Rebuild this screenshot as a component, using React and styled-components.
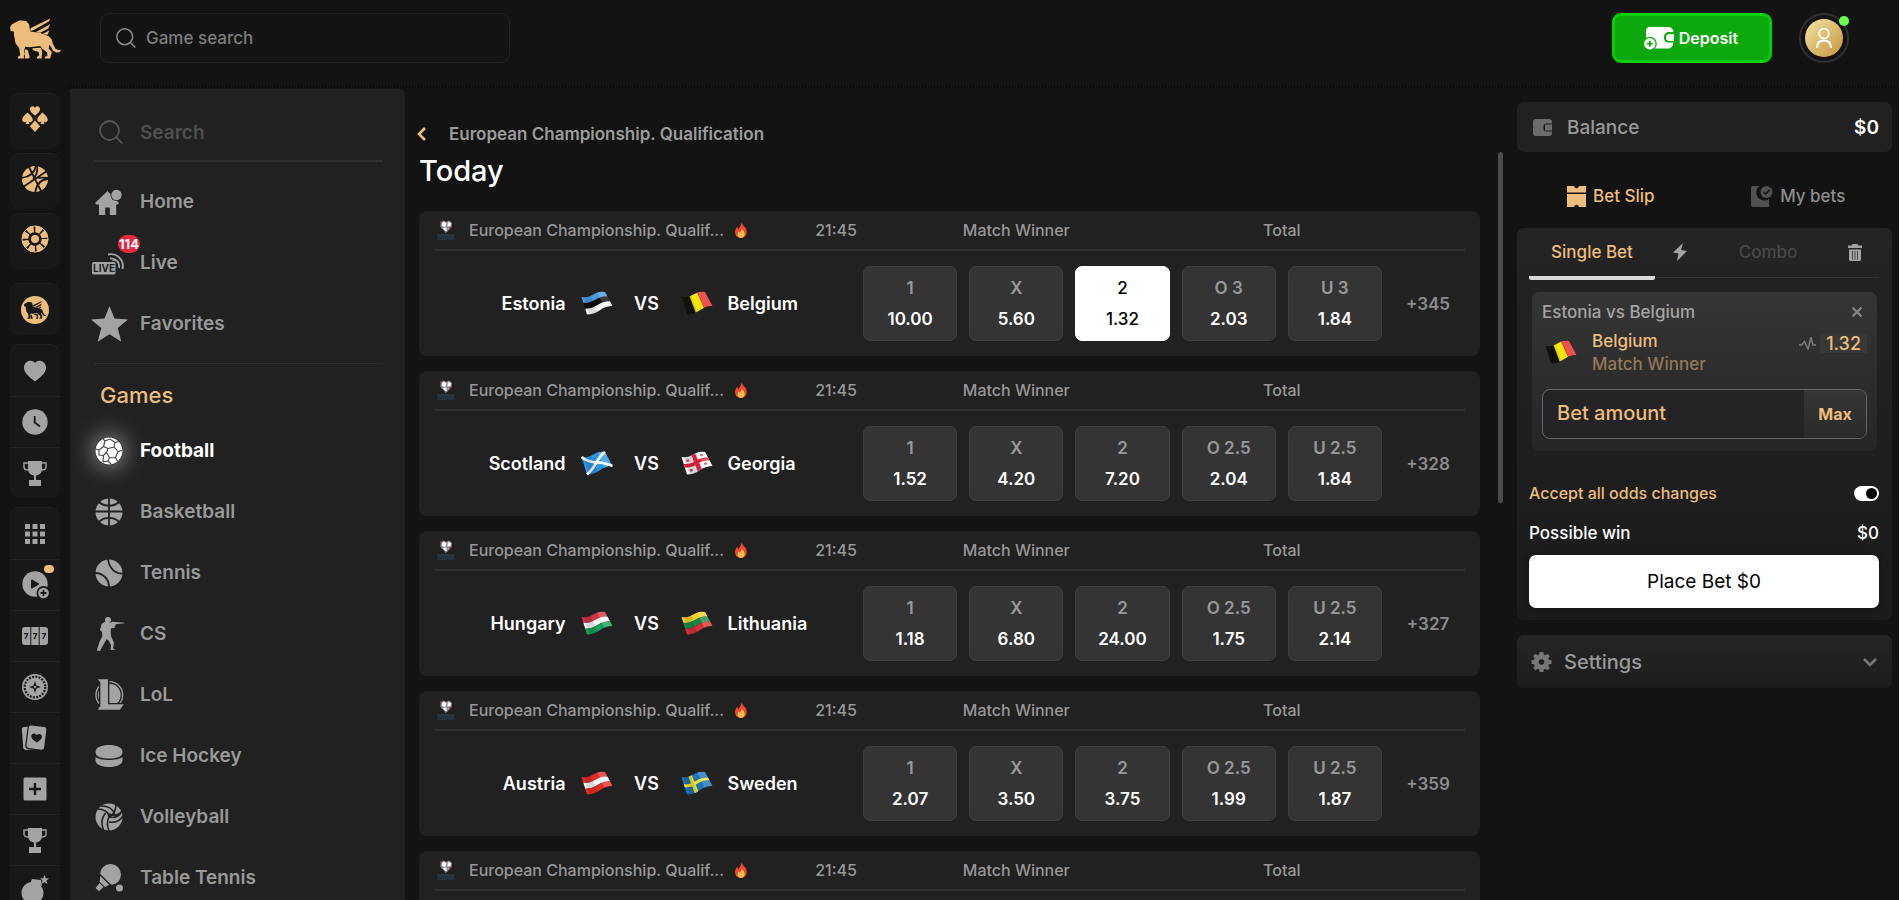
import { useState } from 'react'
import styled, { createGlobalStyle } from 'styled-components'


const gold = '#ecbd7c'
const grey = '#a3a3a3'
const panel = '#212121'

const GlobalStyle = createGlobalStyle`
  * {
    box-sizing: border-box;
  }
  body {
    margin: 0;
    background: #131313;
    color: white;
    font-family: Inter, "Liberation Sans", sans-serif;
    font-size: 16px;
    font-weight: 500;
  }
  button, input {
    font: inherit;
    color: inherit;
    padding: 0;
    border: none;
    background: none;
  }
  button {
    cursor: pointer;
  }
  a {
    color: inherit;
    text-decoration: none;
  }
  h1, h2, h3, ul, p {
    margin: 0;
    padding: 0;
    list-style: none;
    font-weight: 500;
  }
  svg {
    display: block;
    flex-shrink: 0;
  }
`


/* ---------- drawings ---------- */

const lionPaths = <>
    <path d="M0 26L6 18 18 12 30 6 50 9 58 18 61 40 90 44 118 54 127 64 130 76 138 92 148 97 156 95 150 103 140 104 130 97 122 82 119 80 118 92 127 102 122 122 106 122 106 117 114 113 112 103 98 92 92 84 60 88 46 86 43 98 42 122 24 122 24 117 31 112 28 90 17 76 12 50 12 40 2 38z"/>
    <path d="M46 94l8 2 6 22-4 4H44l2-6-3-8zM68 91l26-2 4 12-2 21H82v-5l7-5-2-10-17-5z"/>
    <path d="M62 30L122 0l-3 9-44 25-13 5zM78 42l44-24-6 13-24 13zM98 48l22-12-6 14z"/>
</>

const Lion = ({size = 52}) =>
    <svg width={size} height={size * 0.8} viewBox="0 0 158 124" fill={gold}>{lionPaths}</svg>

const Svg = ({w = 28, h = 28, box, children}) =>
    <svg width={w} height={h} viewBox={box || `0 0 ${w} ${h}`} fill="currentColor">{children}</svg>

const SearchIcon = ({size = 20}) =>
    <svg width={size} height={size} viewBox="0 0 24 24" fill="none" stroke="currentColor" strokeWidth="1.8">
        <circle cx="10.5" cy="10.5" r="9.5"/>
        <path d="M17.3 17.3l6 6"/>
    </svg>

const SuitsIcon = () =>
    <Svg w={26} h={26}>
        <path d="M13 9.5C9 6.5 8 5 8 3c0-3 4-4 5-1 1-3 5-2 5 1 0 2-1 3.5-5 6.5z"/>
        <path d="M5.5 6.5C9 10 10.8 11.5 10.8 13.8c0 2.4-3 3-4.3 1.7L7.5 18h-4l1-2.5C3.2 16.8.2 16.2.2 13.8.2 11.5 2 10 5.5 6.5zM20.5 6.5c3.5 3.5 5.3 5 5.3 7.3 0 2.4-3 3-4.3 1.7l1 2.5h-4l1-2.5c-1.3 1.3-4.3.7-4.3-1.7 0-2.3 1.8-3.8 5.3-7.3z"/>
        <path d="M13 14.5l5.2 5.8L13 26l-5.2-5.7z"/>
    </Svg>

const SportIcon = () =>
    <Svg w={26} h={26}>
        <circle cx="13" cy="13" r="13"/>
        <g fill="none" stroke="#181818" strokeWidth="1.8">
            <path d="M1 21L25 5M7 1l12 24M14-1c-1 8-6 12-15 13M27 13c-9 0-13 6-14 15M15-1c1 6-1 11-4 14M26 12c-7-1-12 0-15 1"/>
        </g>
    </Svg>

const RouletteIcon = () =>
    <Svg w={28} h={28}>
        <circle cx="14" cy="14" r="10" fill="none" stroke="currentColor" strokeWidth="6.5" strokeDasharray="6.2 1.654"/>
        <circle cx="14" cy="14" r="13" fill="none" stroke="currentColor" strokeWidth="1"/>
        <circle cx="14" cy="14" r="4"/>
    </Svg>

const LionCoinIcon = () =>
    <svg width="28" height="28" viewBox="0 0 28 28">
        <circle cx="14" cy="14" r="14" fill={gold}/>
        <svg x="3" y="5" width="23" height="18" viewBox="0 0 158 124" fill="#181818">{lionPaths}</svg>
    </svg>

const HeartIcon = () =>
    <Svg w={24} h={22}>
        <path d="M12 21.5C4 15.5 1 12 1 7.5 1 1 9-1.5 12 3c3-4.5 11-2 11 4.5 0 4.5-3 8-11 14z"/>
    </Svg>

const ClockIcon = () =>
    <Svg w={26} h={26}>
        <circle cx="13" cy="13" r="12.7"/>
        <path d="M12.7 7v6.5l5.3 4" fill="none" stroke="#181818" strokeWidth="1.8"/>
    </Svg>

const TrophyIcon = () =>
    <Svg w={24} h={25}>
        <path d="M5 0h14v8c0 3.5-2.5 6-6 6.5V19h5v6H6v-6h5v-4.5C7.5 14 5 11.5 5 8z"/>
        <path d="M5.5 2H1v4c0 2 1.5 3 4.5 3M18.5 2H23v4c0 2-1.5 3-4.5 3" fill="none" stroke="currentColor" strokeWidth="1.4"/>
    </Svg>

const GridIcon = () =>
    <Svg w={20} h={20}>
        <path d="M0 0h5v5H0zM7.5 0h5v5h-5zM15 0h5v5h-5zM0 7.5h5v5H0zM7.5 7.5h5v5h-5zM15 7.5h5v5h-5zM0 15h5v5H0zM7.5 15h5v5h-5zM15 15h5v5h-5z"/>
    </Svg>

const PlayPlusIcon = () =>
    <Svg w={28} h={28}>
        <circle cx="14" cy="13" r="12.7"/>
        <path d="M11 9.5l6 3.5-6 3.5z" fill="#181818" stroke="#181818" strokeLinejoin="round" strokeWidth="2"/>
        <circle cx="22.5" cy="22" r="7" fill="#181818"/>
        <circle cx="22.5" cy="22" r="5.3"/>
        <path d="M22.5 19v6M19.5 22h6" stroke="#181818" strokeWidth="1.8"/>
    </Svg>

const SlotsIcon = () =>
    <Svg w={26} h={18}>
        <rect width="26" height="18" rx="3"/>
        <path d="M8.8 0v18M17.2 0v18" stroke="#181818"/>
        <g fill="#181818" fontSize="8" fontWeight="800" textAnchor="middle">
            <text x="4.2" y="12">7</text>
            <text x="13" y="12">7</text>
            <text x="21.8" y="12">7</text>
        </g>
    </Svg>

const ChipIcon = () =>
    <Svg w={26} h={26}>
        <circle cx="13" cy="13" r="13"/>
        <circle cx="13" cy="13" r="10.3" fill="none" stroke="#181818" strokeWidth="2.2" strokeDasharray="2 1.236"/>
        <path d="M13 7l1.5 4.5L19 13l-4.5 1.5L13 19l-1.5-4.5L7 13l4.5-1.5z" fill="#181818"/>
        <circle cx="13" cy="13" r="1.2"/>
    </Svg>

const CardsIcon = () =>
    <Svg w={28} h={28}>
        <rect x="1.5" y="2.5" width="18" height="23" rx="2.5" transform="rotate(-4 10 14)"/>
        <rect x="6" y="1.5" width="19" height="24" rx="3" transform="rotate(7 15 13)" stroke="#181818" strokeWidth="1.2"/>
        <path d="M16 18.5c-5-3-6-5-5.6-7 .6-2.5 4-2.8 5.3-.4 1.8-2.1 5.2-1.3 5.3 1.2 0 2.2-1.5 4-5 6.2z" fill="#181818"/>
    </Svg>

const PlusBoxIcon = () =>
    <Svg w={24} h={24}>
        <rect x=".5" y=".5" width="23" height="23" rx="1.5"/>
        <path d="M12 6v12M6 12h12" stroke="#181818" strokeWidth="2.4"/>
    </Svg>

const BombIcon = () =>
    <Svg w={28} h={32}>
        <circle cx="11.5" cy="18" r="11"/>
        <path d="M9 9l2-5 9 1 1 6z"/>
        <path d="M23.5 0l1.3 3.2 3.2.2-2.5 2.2.9 3.4-2.9-1.8L20.6 9l.9-3.4L19 3.4l3.2-.2z"/>
    </Svg>

const HomeIcon = () =>
    <Svg w={28} h={26}>
        <path d="M0 14L12.5 2l11.5 12-1.5 1.5h-1.3V26h-6.4v-7.5h-4.6V26H4V15.5H1.5z"/>
        <circle cx="21.5" cy="6" r="6" fill={panel}/>
        <circle cx="21.5" cy="6" r="5.2"/>
    </Svg>

const LiveIcon = () =>
    <Svg w={34} h={24}>
        <path d="M16 3.5A12 12 0 0 1 30.5 18M18 7.5A8 8 0 0 1 27 17" fill="none" stroke="currentColor" strokeWidth="1.9"/>
        <circle cx="21.5" cy="11.5" r="2.6"/>
        <rect y="10" width="24.5" height="14" rx="2" fill={panel}/>
        <rect y="11" width="23.5" height="12.5" rx="1.5"/>
        <text x="12" y="21" fontSize="10" fontWeight="700" textAnchor="middle" fill={panel}>LIVE</text>
    </Svg>

const StarIcon = () =>
    <Svg w={37} h={36}>
        <path d="M18.5 0l5 12.5L37 13.5 26.7 22l3.6 13.7-11.8-7.5-11.8 7.5L10.3 22 0 13.5l13.5-1z"/>
    </Svg>

const FootballIcon = () =>
    <Svg w={28} h={28}>
        <circle cx="14" cy="14" r="13.5" fill="white"/>
        <g fill="none" stroke="#444" strokeWidth="1.1">
            <path d="M13 11.5l6-1.5 4 4.5-2.5 6-6 .2-3-5.2zM13 11.5L8.5 9.5 4 13v5l4.5.5 3-3M19 10l1-4.5-5-3.5-5 2-1.5 5.5M20 5.5l3.5-1M23 14.5l4-1M20.5 20.5l2 3.5M14.5 20.7L13 24l-5 1M8.5 18.5L8 25M4 13l-3-1M10 4L8 2M13 24l3 3"/>
        </g>
    </Svg>

const BasketballIcon = () =>
    <Svg w={28} h={28}>
        <circle cx="14" cy="14" r="13.5"/>
        <g fill="none" stroke={panel} strokeWidth="1.8">
            <path d="M14 0v28M0 13.5h28M4 4c5 5 15 5 20 0M4 24c5-5.5 15-5.5 20 0"/>
        </g>
    </Svg>

const TennisIcon = () =>
    <Svg w={28} h={28}>
        <circle cx="14" cy="14" r="13.5"/>
        <path d="M0 14c8 0 14 6 14 14M13 0c1 9 7 15 15 14.5" fill="none" stroke={panel} strokeWidth="1.8"/>
    </Svg>

const ShooterIcon = () =>
    <Svg w={29} h={34} box="0 0 87 102">
        <circle cx="39" cy="9" r="9"/>
        <path d="M30 14l-10 6-5 18 6 7 1 13-9 18-7 22 1 3 8 1 3-6 17-30 6 5 7 13-1 15 14-1-7-4 3-16-9-21-1-15 1-8 10-1 4-11 27-3v-2l-27-2-9-1-8 3z"/>
    </Svg>

const LolIcon = () =>
    <Svg w={29} h={31} box="0 0 87 93">
        <circle cx="43" cy="48" r="40" fill="none" stroke="currentColor" strokeWidth="4"/>
        <circle cx="43" cy="48" r="34"/>
        <path d="M8 1h31v75h47l-11 16H8l8-11V10z" stroke={panel} strokeWidth="8"/>
        <path d="M8 1h31v75h47l-11 16H8l8-11V10z"/>
    </Svg>

const PuckIcon = () =>
    <Svg w={28} h={24}>
        <path d="M.5 8C.5 3 7 1 14 1s13.5 2 13.5 7S21 14.500 14 14.500.5 13 .5 8z"/>
        <path d="M.5 13c4 4 23 4 27 0v3.500C27 21 21 23 14 23S1 21 .5 16.500z"/>
    </Svg>

const VolleyballIcon = () =>
    <Svg w={28} h={28}>
        <circle cx="14" cy="14" r="13.5"/>
        <g fill="none" stroke={panel} strokeWidth="1.6">
            <path d="M14 14c0-5-5-8-12-8M19.5 11C18 6 13 3 6 3M27 8c-3 4-8 5-13 3M14 14c5-2 7-6 7-13M10.500 10c-4 5-5 10-2 17M14 14c-2 4-2 9 0 14M14 19c6 1 11-1 14-6M14 14c4 1 9 0 12-4"/>
        </g>
    </Svg>

const TableTennisIcon = () =>
    <Svg w={28} h={28}>
        <circle cx="15.5" cy="10.5" r="10.5"/>
        <path d="M5.5 12.5L14 21l-4 2-5.5-5.5z"/>
        <path d="M5 10.5L16 21.5" stroke={panel} strokeWidth="1.5"/>
        <path d="M4.5 19l4 4L4 27.3.5 24z"/>
        <circle cx="24.5" cy="24" r="4.7" fill={panel}/>
        <circle cx="24.5" cy="24" r="3.5"/>
    </Svg>

const WalletPlusIcon = () =>
    <Svg w={30} h={23}>
        <path d="M6 0h18c3 0 5 1.5 5.5 5H25c-3.5 0-5 2.5-5 5.5s1.5 5 5 5h4.5c-.5 4-2.5 6-5.5 6H7c-3 0-5-2-5-5V5c0-3 1-5 4-5z"/>
        <path d="M25.5 7H30v7h-4.5c-2.5 0-3.5-1.5-3.5-3.5S23 7 25.5 7z"/>
        <circle cx="5.8" cy="16.7" r="7" fill="#0ca80c"/>
        <circle cx="5.8" cy="16.7" r="5.7"/>
        <path d="M5.8 13.7v6M2.8 16.7h6" stroke="#0ca80c" strokeWidth="1.8"/>
    </Svg>

const UserIcon = () =>
    <svg width="16" height="20" viewBox="0 0 16 20" fill="none" stroke="white" strokeWidth="1.8">
        <circle cx="8" cy="5.5" r="4.8"/>
        <path d="M1 20c0-5.5 3-7.5 7-7.5s7 2 7 7.5"/>
    </svg>

const WalletIcon = () =>
    <Svg w={19} h={17}>
        <path d="M3 0h13a3 3 0 0 1 3 3v1.5h-6A2.5 2.5 0 0 0 10.5 7v3a2.5 2.5 0 0 0 2.5 2.5h6V14a3 3 0 0 1-3 3H3a3 3 0 0 1-3-3V3a3 3 0 0 1 3-3z" fill="#6c6c6c"/>
        <rect x="12" y="5.5" width="7" height="6" fill="#6c6c6c"/>
    </Svg>

const TicketIcon = () =>
    <Svg w={19} h={21}>
        <path d="M0 0h7c.5 3 4.5 3 5 0h7v6.5H0zM0 8h19v13h-7c-.5-3-4.5-3-5 0H0z"/>
    </Svg>

const MyBetsIcon = () =>
    <Svg w={22} h={21}>
        <path d="M2 0h6.500a8 8 0 0 0 9.500 13v8H2a2 2 0 0 1-2-2V2a2 2 0 0 1 2-2z" fill="#515151"/>
        <circle cx="15.5" cy="6" r="6" fill="#515151"/>
        <path d="M12.5 6l2.200 2 4-4.200" fill="none" stroke="#131313" strokeWidth="1.6"/>
    </Svg>

const BoltIcon = () =>
    <Svg w={14} h={18}>
        <path d="M10 0L0 9.5l5.5 1L4 18l10-10-6-1z"/>
    </Svg>

const TrashIcon = () =>
    <Svg w={14} h={17}>
        <path d="M4.5 0h5l.7 1.5H14V4H0V1.5h3.8zM1 5.5h12V16l-1 1H2l-1-1z"/>
        <path d="M4.5 7v8.5M7 7v8.5M9.5 7v8.5" stroke="#4b4b4b" strokeWidth="1"/>
    </Svg>

const CloseIcon = () =>
    <svg width="10" height="10" viewBox="0 0 10 10" stroke="#8a8a8a" strokeWidth="2">
        <path d="M.5.5l9 9M9.5.5l-9 9"/>
    </svg>

const PulseIcon = () =>
    <svg width="17" height="13" viewBox="0 0 17 13" fill="none" stroke="#7d7d7d" strokeWidth="1.5">
        <path d="M0 8h2.5L5.5 4.5 9 12l3-11.5L14 8h3"/>
    </svg>

const Chevron = ({dir}) =>
    <svg width="14" height="14" viewBox="0 0 14 14" fill="none" stroke="currentColor" strokeWidth="2.6">
        <path d={dir === 'left' ? 'M10 1L4 7l6 6' : 'M1 4l6 6 6-6'}/>
    </svg>

const GearIcon = () =>
    <Svg w={21} h={20} box="0 0 20 20">
        <path fillRule="evenodd" d="M8.2 0h3.6l.5 2.5 1.5.7L16 1.8 18.3 4l-1.5 2.2.7 1.6 2.5.5v3.5l-2.5.4-.7 1.6 1.5 2.2-2.3 2.3-2.2-1.5-1.5.7-.5 2.5H8.2l-.5-2.5-1.5-.7L4 18.3 1.7 16l1.5-2.2-.7-1.6L0 11.8V8.3l2.5-.5.7-1.6L1.7 4 4 1.8l2.2 1.4 1.5-.7zM10 7.2a2.8 2.8 0 1 0 0 5.6 2.8 2.8 0 0 0 0-5.6z"/>
    </Svg>

const FireIcon = () =>
    <svg width="12" height="16" viewBox="0 0 12 16">
        <path d="M6.5 0C7 3 10 4 11.3 7.5 12.8 12 10 16 6 16S-.7 12.5.3 8.5C.7 7 1.5 6 1.8 5c.7.5 1.2 1.2 1.4 2C5 5.5 6.5 3 6.5 0z" fill="#f2452f"/>
        <path d="M6.8 6c.2 2 3 3.5 2.8 6-.1 2.5-1.8 3.7-3.6 3.7S2.3 14.3 2.5 12c.1-1 .6-1.8 1.2-2.3.3.5.6.8 1 1C5.8 9.5 6.7 8 6.8 6z" fill="#fbc150"/>
    </svg>

const EmblemIcon = () =>
    <svg width="20" height="21" viewBox="0 0 20 21">
        <path d="M4.5 2L8 .5l2 1.500L13 .5 16 3l-.5 4L11 12l-2 1v-1.500L4.500 7z" fill="#8d9297"/>
        <path d="M6 2.500L9 2l1.500 2-1.500 3-3-1zM12 2l3 1-.5 3-3 .5zM7 8l3-.5L11 11H9z" fill="white"/>
        <path d="M4.500 1.500L6.500.5 5 5zM14 7l2-1-3 4z" fill="#9c3f46"/>
        <g fill="#31485a" fontSize="3" fontWeight="700" textAnchor="middle">
            <text x="10" y="17">EUROPEAN</text>
            <text x="10" y="20">QUALIFIERS</text>
        </g>
    </svg>


/* Flags wave: s runs along the cloth, t runs down it, both from 0 to 1 */

const point = (s, t) => {
    const x = .5 + 23.5 * s + 5.5 * t + 2 * s * t
    const y = 6 + 17.5 * t - 5 * s - 3.5 * s * t + 1.2 * Math.sin(2 * Math.PI * s)
    return `${x.toFixed(2)},${y.toFixed(2)}`
}

const steps = [0, 1, 2, 3, 4, 5, 6, 7, 8]

const Patch = ({s0 = 0, s1 = 1, t0 = 0, t1 = 1, fill, opacity}) => {
    const top = steps.map(i => point(s0 + (s1 - s0) * i / 8, t0))
    const bottom = steps.map(i => point(s1 - (s1 - s0) * i / 8, t1))
    return <polygon points={[...top, ...bottom].join(' ')} fill={fill} opacity={opacity}/>
}

const stripes = (...colors) => colors.map((fill, i) => ({t0: i / 3, t1: (i + 1) / 3, fill}))

const flags = {
    Estonia: stripes('#4a9be0', '#08090b', '#f7f7f7'),
    Belgium: [{s1: .34, fill: '#15130f'}, {s0: .34, s1: .67, fill: '#f6e40c'}, {s0: .67, fill: '#ec2626'}],
    Scotland: [{fill: '#2b95e6'}],
    Georgia: [
        {fill: '#f7f7f7'}, {s0: .42, s1: .58, fill: '#e01e3c'}, {t0: .4, t1: .6, fill: '#e01e3c'},
        {s0: .16, s1: .27, t0: .14, t1: .28, fill: '#e8405a'}, {s0: .73, s1: .84, t0: .14, t1: .28, fill: '#e8405a'},
        {s0: .16, s1: .27, t0: .72, t1: .86, fill: '#e8405a'}, {s0: .73, s1: .84, t0: .72, t1: .86, fill: '#e8405a'},
    ],
    Hungary: stripes('#d23344', '#f7f7f7', '#16a05a'),
    Lithuania: stripes('#f0d02c', '#178a48', '#d63038'),
    Austria: stripes('#e42b28', '#f7f7f7', '#e42b28'),
    Sweden: [{fill: '#1c74b8'}, {s0: .3, s1: .44, fill: '#f2e32a'}, {t0: .41, t1: .59, fill: '#f2e32a'}],
}

const Flag = ({country}) =>
    <svg width="32" height="26" viewBox="0 0 32 26">
        {flags[country].map((patch, i) => <Patch key={i} {...patch}/>)}
        {country === 'Scotland' &&
            <g fill="none" stroke="white" strokeWidth="2.6">
                <polyline points={steps.map(i => point(i / 8, i / 8)).join(' ')}/>
                <polyline points={steps.map(i => point(i / 8, 1 - i / 8)).join(' ')}/>
            </g>}
        <Patch s0={.1} s1={.4} fill="black" opacity=".12"/>
        <Patch s0={.68} fill="white" opacity=".2"/>
    </svg>


/* ---------- header ---------- */

const Page = styled.div`
  display: flex;
  flex-direction: column;
  height: 100vh;
  overflow: hidden;
  border-right: 1px solid white;
`

const Header = styled.header`
  display: flex;
  align-items: flex-start;
  flex-shrink: 0;
  height: 89px;
  padding: 13px 50px 0 10px;
  background: repeating-linear-gradient(90deg, #0a0a0a 0 1px, transparent 1px 3px) 70px 85px / 100% 3px no-repeat;
`

const Logo = styled.a`
  width: 90px;
  padding-top: 5px;
`

const GameSearch = styled.label`
  display: flex;
  align-items: center;
  gap: 10px;
  width: 410px;
  height: 50px;
  margin-right: auto;
  padding: 0 15px;
  border: 1px solid #212121;
  border-radius: 9px;
  color: #8b8b8b;
  font-size: 17px;
  input {
    flex: 1;
    min-width: 0;
    outline: none;
  }
  input::placeholder {
    color: #7d7d7d;
    opacity: 1;
  }
`

const DepositButton = styled.button`
  display: flex;
  align-items: center;
  justify-content: center;
  gap: 5px;
  width: 160px;
  height: 50px;
  margin-right: 27px;
  padding-right: 2px;
  border: 3px solid #05cf05;
  border-radius: 9px;
  background: #0ca80c;
  font-weight: 600;
`

const Avatar = styled.button`
  position: relative;
  display: grid;
  place-items: center;
  width: 50px;
  height: 50px;
  border: 2px solid #303030;
  border-radius: 50%;
`

const AvatarFace = styled.span`
  display: grid;
  place-items: center;
  width: 38px;
  height: 38px;
  border-radius: 50%;
  background: linear-gradient(135deg, #f4e3a4, #c4953c);
`

const OnlineDot = styled.span`
  position: absolute;
  top: 1px;
  right: -2px;
  width: 10px;
  height: 10px;
  border-radius: 50%;
  background: #66ff4d;
`

const TopBar = () =>
    <Header>
        <Logo href="#" aria-label="Main page"><Lion/></Logo>
        <GameSearch>
            <SearchIcon/>
            <input type="text" placeholder="Game search" aria-label="Game search"/>
        </GameSearch>
        <DepositButton><WalletPlusIcon/>Deposit</DepositButton>
        <Avatar aria-label="Profile">
            <AvatarFace><UserIcon/></AvatarFace>
            <OnlineDot/>
        </Avatar>
    </Header>


/* ---------- icon rail ---------- */

const Body = styled.div`
  display: flex;
  flex: 1;
  min-height: 0;
`

const Rail = styled.nav`
  display: flex;
  flex-direction: column;
  flex-shrink: 0;
  width: 70px;
  padding: 5px 10px 0;
  overflow: hidden;
`

const RailGroup = styled.div`
  flex-shrink: 0;
  margin-bottom: ${props => props.$tight ? '5px' : '10px'};
  margin-top: ${props => props.$spaced ? '10px' : 0};
  border-radius: 9px;
  background: #181818;
  box-shadow: 0 -1px 0 #202020;
`

const RailLink = styled.a`
  position: relative;
  display: grid;
  place-items: center;
  height: ${props => props.$tall ? '55px' : '51px'};
  padding-bottom: ${props => props.$tall ? '5px' : 0};
  color: ${props => props.$gold ? gold : grey};
  & + & {
    border-top: 1px solid #232323;
  }
`

const NewDot = styled.span`
  position: absolute;
  top: 5px;
  right: 6px;
  width: 10px;
  height: 8px;
  border-radius: 4px;
  background: ${gold};
`

const RailItem = ({icon: Icon, label, dot, ...rest}) =>
    <RailLink href="#" aria-label={label} {...rest}>
        <Icon/>
        {dot && <NewDot/>}
    </RailLink>

const IconRail = () =>
    <Rail>
        <RailGroup $tight><RailItem $tall $gold icon={SuitsIcon} label="Casino"/></RailGroup>
        <RailGroup $tight><RailItem $tall $gold icon={SportIcon} label="Sport"/></RailGroup>
        <RailGroup $tight><RailItem $tall $gold icon={RouletteIcon} label="Live casino"/></RailGroup>
        <RailGroup $spaced><RailItem $gold icon={LionCoinIcon} label="Club"/></RailGroup>
        <RailGroup>
            <RailItem icon={HeartIcon} label="Favorites"/>
            <RailItem icon={ClockIcon} label="Recent"/>
            <RailItem icon={TrophyIcon} label="Tournaments"/>
        </RailGroup>
        <RailGroup>
            <RailItem icon={GridIcon} label="All games"/>
            <RailItem icon={PlayPlusIcon} label="New games" dot/>
            <RailItem icon={SlotsIcon} label="Slots"/>
            <RailItem icon={ChipIcon} label="Table games"/>
            <RailItem icon={CardsIcon} label="Cards"/>
            <RailItem icon={PlusBoxIcon} label="More"/>
            <RailItem icon={TrophyIcon} label="Winners"/>
            <RailItem icon={BombIcon} label="Instant games"/>
        </RailGroup>
    </Rail>


/* ---------- sports menu ---------- */

const Menu = styled.nav`
  flex-shrink: 0;
  width: 335px;
  padding: 0 22px 0 24px;
  overflow: hidden;
  border-radius: 0 6px 0 0;
  background: ${panel};
`

const MenuSearch = styled.label`
  display: flex;
  align-items: center;
  gap: 17px;
  height: 73px;
  margin-bottom: 9px;
  padding: 15px 0 0 5px;
  border-bottom: 2px solid #303030;
  color: #555;
  font-size: 19px;
  font-weight: 600;
  input {
    flex: 1;
    min-width: 0;
    outline: none;
  }
  input::placeholder {
    color: #505050;
    opacity: 1;
  }
`

const MenuLink = styled.a`
  display: flex;
  align-items: center;
  gap: 16px;
  height: 61px;
  color: ${props => props.$active ? 'white' : '#999'};
  font-size: 19px;
  font-weight: ${props => props.$active ? 700 : 600};
`

const MenuIcon = styled.span`
  position: relative;
  display: flex;
  justify-content: center;
  width: 30px;
  color: ${grey};
  svg {
    border-radius: 50%;
    box-shadow: ${props => props.$active ? '0 0 24px rgba(255, 255, 255, .65)' : 'none'};
    overflow: visible;
  }
`

const Badge = styled.span`
  position: absolute;
  top: -16px;
  left: 24px;
  padding: 0 1px;
  border-radius: 9px;
  background: #e6293f;
  color: white;
  font-size: 13px;
  font-weight: 700;
  line-height: 18px;
`

const MenuTitle = styled.h2`
  padding-left: 6px;
  border-top: 1px solid #303030;
  margin-top: 9px;
  color: ${gold};
  font-size: 22px;
  line-height: 62px;
  height: 57px;
`

const MenuItem = ({icon: Icon, title, active, badge}) =>
    <li>
        <MenuLink href="#" $active={active}>
            <MenuIcon $active={active}>
                <Icon/>
                {badge && <Badge>{badge}</Badge>}
            </MenuIcon>
            {title}
        </MenuLink>
    </li>

const games = [
    {title: 'Football', icon: FootballIcon, active: true},
    {title: 'Basketball', icon: BasketballIcon},
    {title: 'Tennis', icon: TennisIcon},
    {title: 'CS', icon: ShooterIcon},
    {title: 'LoL', icon: LolIcon},
    {title: 'Ice Hockey', icon: PuckIcon},
    {title: 'Volleyball', icon: VolleyballIcon},
    {title: 'Table Tennis', icon: TableTennisIcon},
]

const SportsMenu = () =>
    <Menu>
        <MenuSearch>
            <SearchIcon size={24}/>
            <input type="text" placeholder="Search" aria-label="Search"/>
        </MenuSearch>
        <ul>
            <MenuItem title="Home" icon={HomeIcon}/>
            <MenuItem title="Live" icon={LiveIcon} badge="114"/>
            <MenuItem title="Favorites" icon={StarIcon}/>
        </ul>
        <MenuTitle>Games</MenuTitle>
        <ul>
            {games.map(game => <MenuItem key={game.title} {...game}/>)}
        </ul>
    </Menu>


/* ---------- matches ---------- */

const Main = styled.main`
  display: flex;
  flex: 1;
  min-width: 0;
  padding: 0 14px;
`

const Feed = styled.div`
  flex: 1;
  min-width: 0;
  padding-top: 33px;
`

const ScrollThumb = styled.div`
  width: 5px;
  height: 351px;
  margin: 63px 0 0 18px;
  border-radius: 3px;
  background: #4a4a4a;
`

const Crumb = styled.a`
  display: flex;
  align-items: center;
  gap: 20px;
  margin-left: -4px;
  color: #9c9c9c;
  font-size: 17px;
  font-weight: 600;
  line-height: 24px;
  svg {
    color: ${gold};
  }
`

const Title = styled.h1`
  margin: 8px 0 23px;
  font-size: 29px;
  line-height: 34px;
`

const Card = styled.article`
  margin-bottom: 15px;
  padding: 0 15px;
  border-radius: 8px;
  background: ${panel};
`

const CardRow = styled.div`
  display: grid;
  grid-template-columns: minmax(0, 1fr) 519px 83px;
  align-items: center;
`

const CardHead = styled(CardRow)`
  height: 40px;
  border-bottom: 2px solid #303030;
  color: #989898;
  line-height: 20px;
`

const CardBody = styled(CardRow)`
  min-height: 105px;
  padding: 15px 0;
`

const League = styled.div`
  display: flex;
  align-items: center;
  padding: 0 6px 0 2px;
  h3 {
    overflow: hidden;
    margin: 0 11px 0 13px;
    font-size: 16px;
    white-space: nowrap;
  }
  time {
    margin-left: auto;
  }
`

const Markets = styled.div`
  display: grid;
  grid-template-columns: repeat(5, 1fr);
  gap: 12px;
  text-align: center;
`

const MarketName = styled.span`
  grid-column: span ${props => props.$span};
`

const Teams = styled.div`
  display: grid;
  grid-template-columns: 1fr 68px 1fr;
  align-items: center;
  padding-right: 4px;
  font-size: 18px;
  font-weight: 600;
  text-align: center;
`

const Team = styled.div`
  display: flex;
  flex-direction: ${props => props.$home ? 'row-reverse' : 'row'};
  align-items: center;
  gap: 15px;
`

const OddButton = styled.button`
  height: 75px;
  border: 1px solid ${props => props.$picked ? 'white' : '#3f3f3f'};
  border-radius: 7px;
  background: ${props => props.$picked ? 'white' : '#343434'};
  color: ${props => props.$picked ? 'black' : 'white'};
  font-size: 17px;
  font-weight: ${props => props.$picked ? 500 : 600};
  line-height: 31px;
  span {
    display: block;
    color: ${props => props.$picked ? 'black' : '#999'};
  }
`

const MoreMarkets = styled.a`
  padding-left: 9px;
  color: #8c8c8c;
  font-size: 17px;
  font-weight: 600;
  text-align: center;
`

const matches = [
    {home: 'Estonia', away: 'Belgium', total: '3', odds: ['10.00', '5.60', '1.32', '2.03', '1.84'], more: 345},
    {home: 'Scotland', away: 'Georgia', total: '2.5', odds: ['1.52', '4.20', '7.20', '2.04', '1.84'], more: 328},
    {home: 'Hungary', away: 'Lithuania', total: '2.5', odds: ['1.18', '6.80', '24.00', '1.75', '2.14'], more: 327},
    {home: 'Austria', away: 'Sweden', total: '2.5', odds: ['2.07', '3.50', '3.75', '1.99', '1.87'], more: 359},
]

const MatchCard = ({children}) =>
    <Card>
        <CardHead>
            <League>
                <EmblemIcon/>
                <h3>European Championship. Qualif...</h3>
                <FireIcon/>
                <time>21:45</time>
            </League>
            <Markets>
                <MarketName $span={3}>Match Winner</MarketName>
                <MarketName $span={2}>Total</MarketName>
            </Markets>
        </CardHead>
        <CardBody>{children}</CardBody>
    </Card>

const MatchOdds = ({match, picked, onPick}) => {
    const labels = ['1', 'X', '2', `O ${match.total}`, `U ${match.total}`]
    return <>
        <Teams>
            <Team $home><Flag country={match.home}/>{match.home}</Team>
            VS
            <Team><Flag country={match.away}/>{match.away}</Team>
        </Teams>
        <Markets>
            {labels.map((label, i) =>
                <OddButton key={label} $picked={picked === i} onClick={() => onPick(i)}>
                    <span>{label}</span>
                    {match.odds[i]}
                </OddButton>
            )}
        </Markets>
        <MoreMarkets href="#">+{match.more}</MoreMarkets>
    </>
}

const Matches = () => {
    const [picks, setPicks] = useState({0: 2})
    return (
        <Main>
            <Feed>
                <Crumb href="#"><Chevron dir="left"/>European Championship. Qualification</Crumb>
                <Title>Today</Title>
                {matches.map((match, i) =>
                    <MatchCard key={match.home}>
                        <MatchOdds
                            match={match}
                            picked={picks[i]}
                            onPick={odd => setPicks({...picks, [i]: odd})}
                        />
                    </MatchCard>
                )}
                {/* the next match, odds not loaded yet */}
                <MatchCard/>
            </Feed>
            <ScrollThumb/>
        </Main>
    )
}


/* ---------- bet slip ---------- */

const Side = styled.aside`
  flex-shrink: 0;
  width: 382px;
  padding: 13px 7px 0 0;
`

const Balance = styled.div`
  display: flex;
  align-items: center;
  gap: 15px;
  height: 50px;
  padding: 0 13px 0 16px;
  border-radius: 7px;
  background: ${panel};
  color: #999;
  font-size: 19px;
  strong {
    margin-left: auto;
    color: white;
    font-weight: 600;
  }
`

const SideTabs = styled.div`
  display: grid;
  grid-template-columns: 1fr 1fr;
  height: 76px;
  padding-top: 12px;
`

const SideTab = styled.button`
  display: flex;
  align-items: center;
  justify-content: center;
  gap: 7px;
  color: ${props => props.$active ? gold : '#8d8d8d'};
  font-size: 17px;
`

const Slip = styled.section`
  padding: 0 13px 12px 12px;
  border-radius: 7px;
  background: linear-gradient(#242424, #1b1b1b);
  font-size: 17px;
`

const SlipTabs = styled.div`
  display: grid;
  grid-template-columns: 126fr 50fr 126fr 48fr;
  height: 50px;
  box-shadow: inset 0 -1px 0 #333;
`

const SlipTab = styled.button`
  display: grid;
  place-items: center;
  height: 52px;
  border-bottom: 4px solid ${props => props.$active ? '#d9d9d9' : 'transparent'};
  border-radius: 2px;
  color: ${props => props.$active ? gold : props.$dim ? '#474747' : grey};
`

const Bet = styled.div`
  margin: 14px 2px 0 3px;
  padding: 10px 10px 12px;
  border-radius: 7px;
  background: linear-gradient(#353535, #262626);
`

const BetTitle = styled.div`
  display: flex;
  align-items: center;
  justify-content: space-between;
  padding-right: 5px;
  color: #a3a3a3;
  line-height: 20px;
`

const Selection = styled.div`
  display: flex;
  align-items: center;
  gap: 15px;
  margin: 8px 0 13px;
  padding-left: 3px;
  color: ${gold};
  line-height: 23px;
`

const SelectionName = styled.div`
  flex: 1;
  p + p {
    color: #93795a;
  }
`

const SelectionOdd = styled.div`
  display: flex;
  align-items: center;
  align-self: flex-start;
  gap: 4px;
  padding-top: 4px;
  font-size: 18px;
  strong {
    padding: 0 6px;
    background: #383838;
    font-weight: 500;
    line-height: 19px;
  }
`

const Amount = styled.div`
  display: flex;
  height: 50px;
  overflow: hidden;
  border: 1px solid #666;
  border-radius: 8px;
  background: #242426;
  color: ${gold};
  input {
    flex: 1;
    min-width: 0;
    padding: 0 0 2px 14px;
    font-size: 20px;
    outline: none;
  }
  input::placeholder {
    color: ${gold};
    opacity: 1;
  }
  button {
    width: 62px;
    background: linear-gradient(#363636, #2a2a2a);
    font-size: 16px;
    font-weight: 700;
  }
`

const SlipRow = styled.div`
  display: flex;
  align-items: center;
  justify-content: space-between;
  margin-top: ${props => props.$gold ? '32px' : '20px'};
  color: ${props => props.$gold ? gold : 'white'};
  font-size: ${props => props.$gold ? '16px' : '17px'};
  line-height: 20px;
`

const Toggle = styled.input.attrs({type: 'checkbox'})`
  display: flex;
  justify-content: flex-start;
  width: 25px;
  height: 15px;
  margin: 0;
  padding: 2px;
  border-radius: 8px;
  background: white;
  appearance: none;
  cursor: pointer;
  &:checked {
    justify-content: flex-end;
  }
  &::before {
    content: '';
    width: 11px;
    height: 11px;
    border-radius: 50%;
    background: black;
  }
`

const PlaceBet = styled.button`
  display: block;
  width: 100%;
  height: 53px;
  margin-top: 12px;
  border-radius: 7px;
  background: white;
  box-shadow: 0 0 10px rgba(0, 0, 0, .35);
  color: black;
  font-size: 19px;
  font-weight: 400;
`

const Settings = styled.button`
  display: flex;
  align-items: center;
  gap: 12px;
  width: 100%;
  height: 53px;
  margin-top: 15px;
  padding: 0 15px 0 14px;
  border-radius: 7px;
  background: linear-gradient(#252525, #1c1c1c);
  color: #777;
  font-size: 20px;
  span {
    flex: 1;
    color: #999;
    text-align: left;
  }
`

const BetSlip = () => {
    const [accept, setAccept] = useState(true)
    return (
        <Side>
            <Balance><WalletIcon/>Balance<strong>$0</strong></Balance>
            <SideTabs>
                <SideTab $active><TicketIcon/>Bet Slip</SideTab>
                <SideTab><MyBetsIcon/>My bets</SideTab>
            </SideTabs>
            <Slip>
                <SlipTabs>
                    <SlipTab $active>Single Bet</SlipTab>
                    <SlipTab aria-label="Quick bet"><BoltIcon/></SlipTab>
                    <SlipTab $dim>Combo</SlipTab>
                    <SlipTab aria-label="Clear"><TrashIcon/></SlipTab>
                </SlipTabs>
                <Bet>
                    <BetTitle>
                        Estonia vs Belgium
                        <button aria-label="Remove"><CloseIcon/></button>
                    </BetTitle>
                    <Selection>
                        <Flag country="Belgium"/>
                        <SelectionName>
                            <p>Belgium</p>
                            <p>Match Winner</p>
                        </SelectionName>
                        <SelectionOdd><PulseIcon/><strong>1.32</strong></SelectionOdd>
                    </Selection>
                    <Amount>
                        <input type="text" placeholder="Bet amount" aria-label="Bet amount"/>
                        <button>Max</button>
                    </Amount>
                </Bet>
                <SlipRow $gold>
                    <label htmlFor="accept">Accept all odds changes</label>
                    <Toggle id="accept" checked={accept} onChange={e => setAccept(e.target.checked)}/>
                </SlipRow>
                <SlipRow><span>Possible win</span><span>$0</span></SlipRow>
                <PlaceBet>Place Bet $0</PlaceBet>
            </Slip>
            <Settings><GearIcon/><span>Settings</span><Chevron dir="down"/></Settings>
        </Side>
    )
}


function App() {
    return (
        <Page>
            <GlobalStyle/>
            <TopBar/>
            <Body>
                <IconRail/>
                <SportsMenu/>
                <Matches/>
                <BetSlip/>
            </Body>
        </Page>
    )
}

export default App
